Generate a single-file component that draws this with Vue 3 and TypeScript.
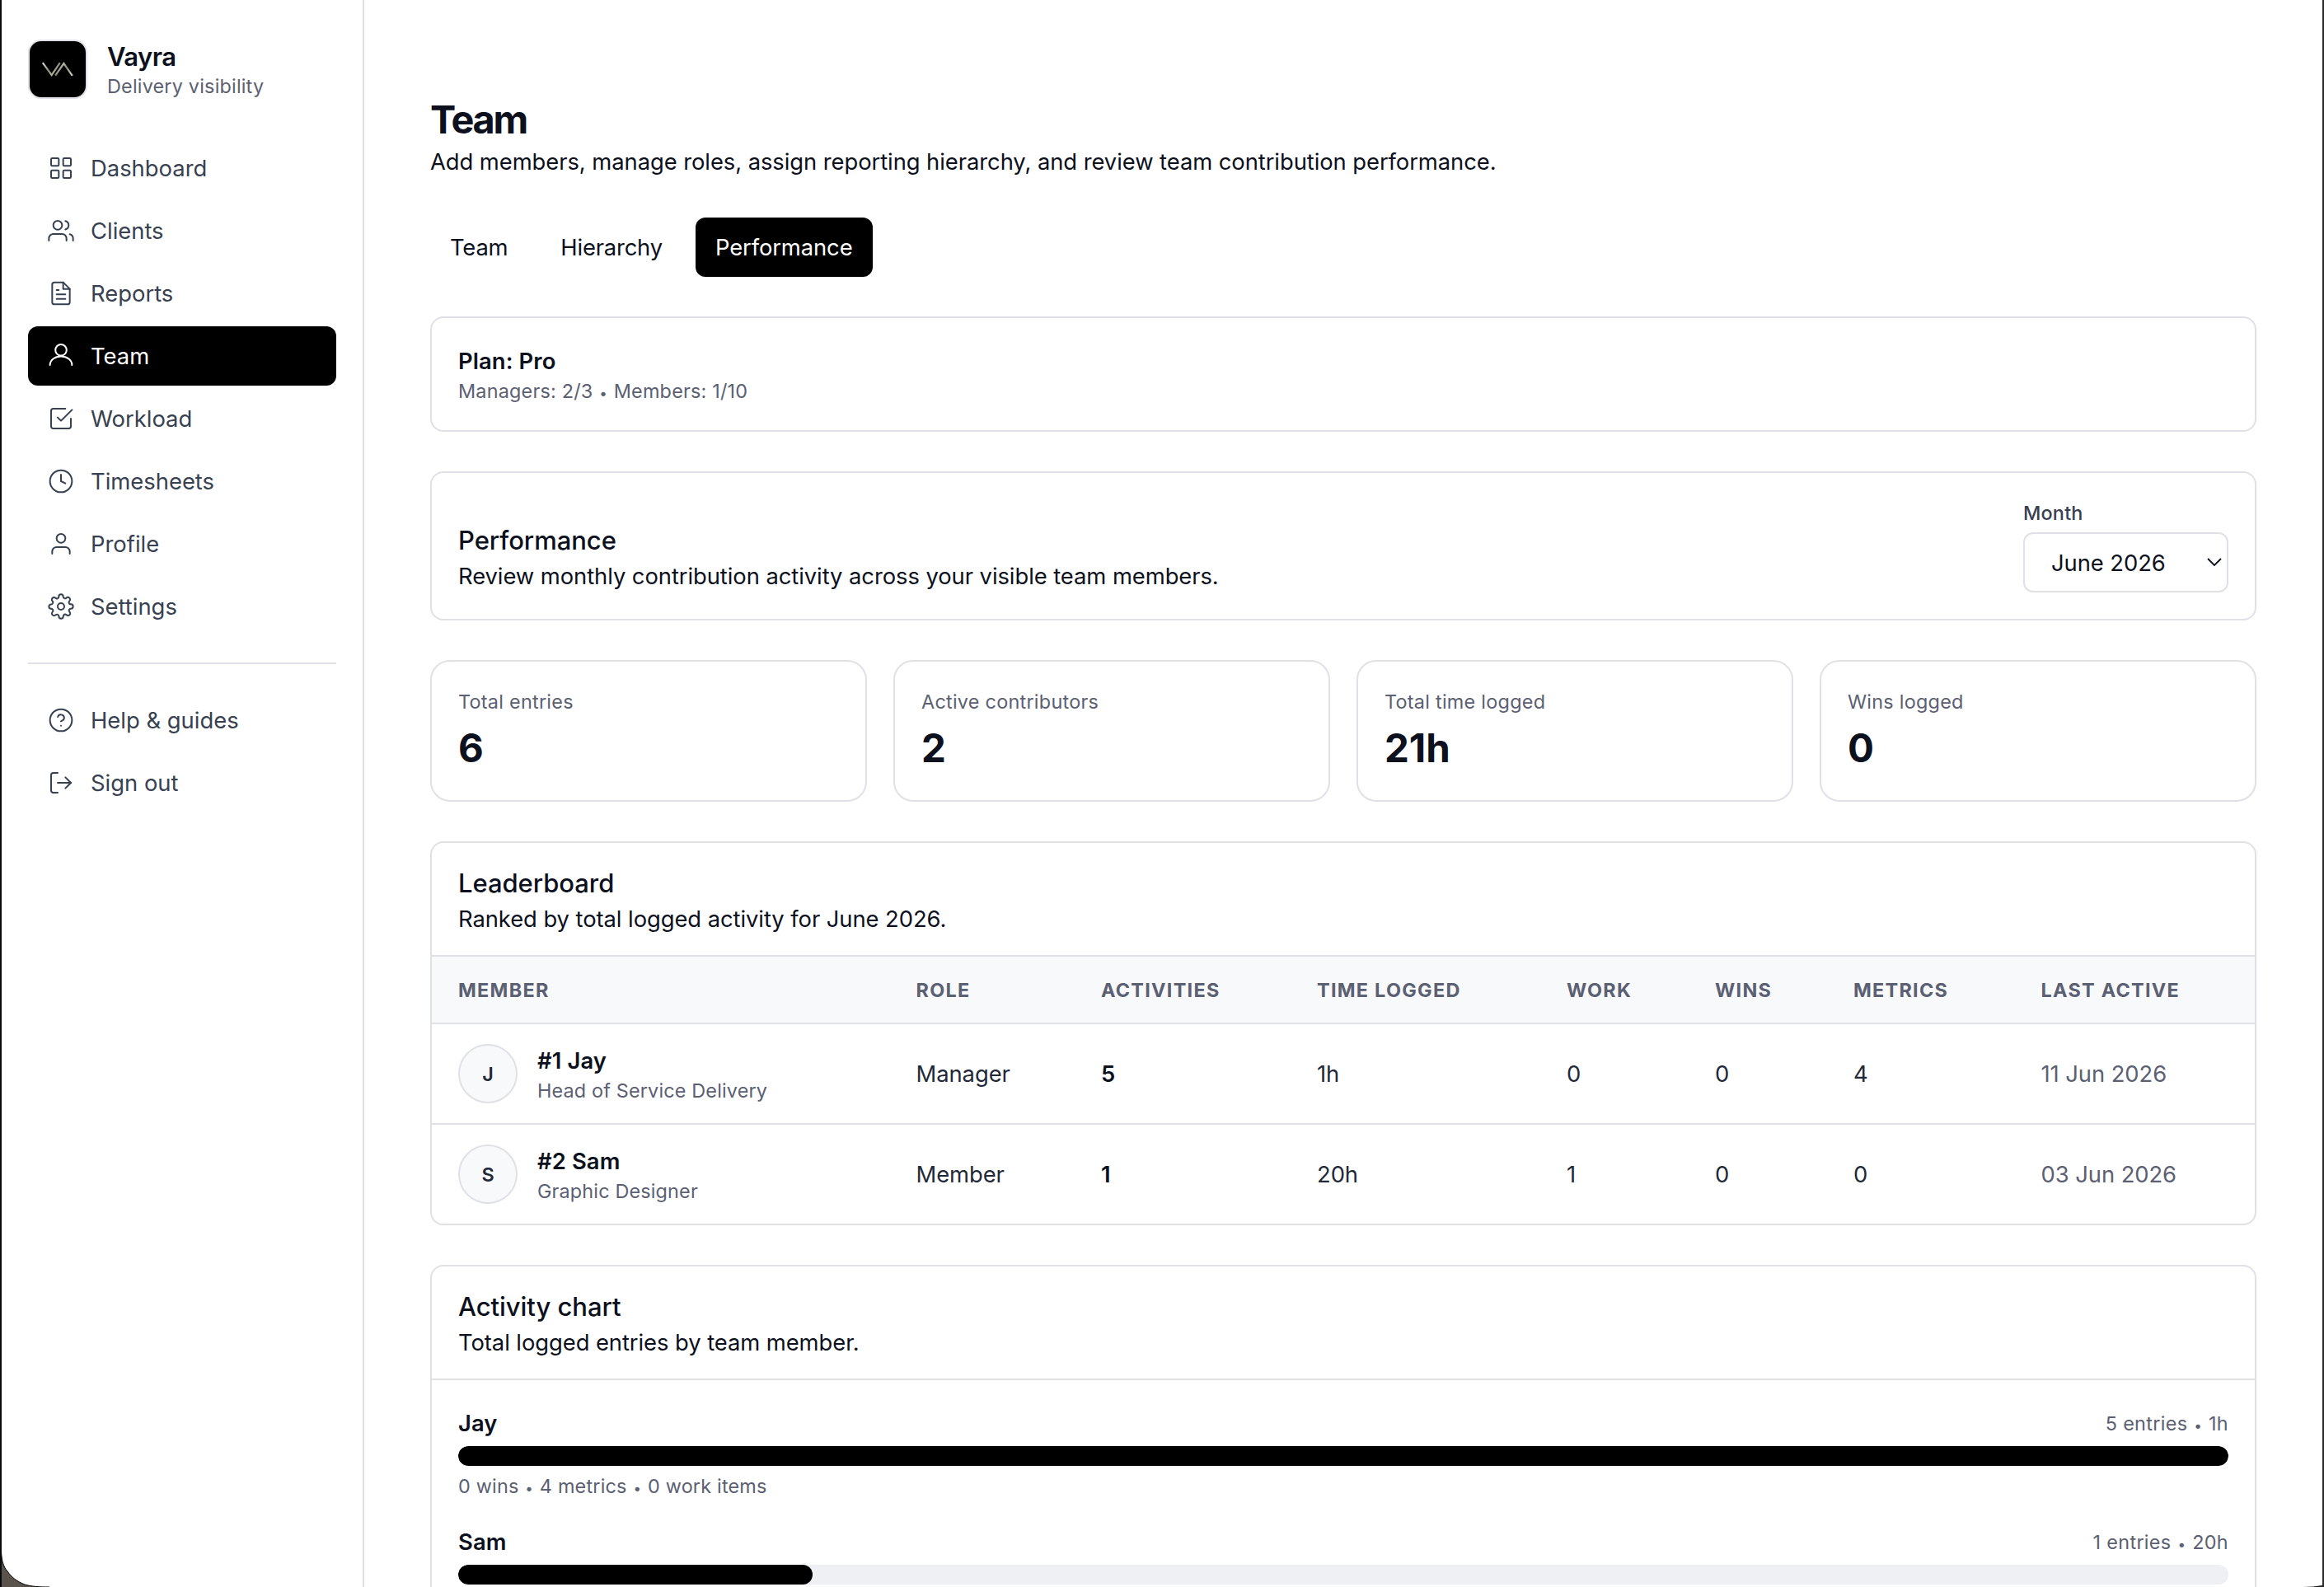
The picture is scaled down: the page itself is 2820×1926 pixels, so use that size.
<script setup lang="ts">
import { ref } from 'vue'

interface NavItem {
  label: string
  icon: string
  active?: boolean
}

const icons: Record<string, string> = {
  dashboard:
    '<rect x="3" y="3" width="7" height="7" rx="1"/><rect x="14" y="3" width="7" height="7" rx="1"/><rect x="3" y="14" width="7" height="7" rx="1"/><rect x="14" y="14" width="7" height="7" rx="1"/>',
  clients:
    '<path d="M17 21v-2a4 4 0 0 0-4-4H5a4 4 0 0 0-4 4v2"/><circle cx="9" cy="7" r="4"/><path d="M23 21v-2a4 4 0 0 0-3-3.87"/><path d="M16 3.13a4 4 0 0 1 0 7.75"/>',
  reports:
    '<path d="M14 2H6a2 2 0 0 0-2 2v16a2 2 0 0 0 2 2h12a2 2 0 0 0 2-2V8z"/><path d="M14 2v6h6"/><path d="M16 13H8"/><path d="M16 17H8"/><path d="M10 9H8"/>',
  team: '<circle cx="12" cy="6.6" r="5.1"/><path d="M2 20.2a10 7.8 0 0 1 20 0"/>',
  workload:
    '<path d="M9 11l3 3L22 4"/><path d="M21 12v7a2 2 0 0 1-2 2H5a2 2 0 0 1-2-2V5a2 2 0 0 1 2-2h11"/>',
  timesheets: '<circle cx="12" cy="12" r="10"/><path d="M12 6v6l4 2"/>',
  profile: '<path d="M20 21v-2a4 4 0 0 0-4-4H8a4 4 0 0 0-4 4v2"/><circle cx="12" cy="7" r="4"/>',
  settings:
    '<circle cx="12" cy="12" r="3"/><path d="M19.4 15a1.65 1.65 0 0 0 .33 1.82l.06.06a2 2 0 0 1 0 2.83 2 2 0 0 1-2.83 0l-.06-.06a1.65 1.65 0 0 0-1.82-.33 1.65 1.65 0 0 0-1 1.51V21a2 2 0 0 1-2 2 2 2 0 0 1-2-2v-.09A1.65 1.65 0 0 0 9 19.4a1.65 1.65 0 0 0-1.82.33l-.06.06a2 2 0 0 1-2.83 0 2 2 0 0 1 0-2.83l.06-.06a1.65 1.65 0 0 0 .33-1.82 1.65 1.65 0 0 0-1.51-1H3a2 2 0 0 1-2-2 2 2 0 0 1 2-2h.09A1.65 1.65 0 0 0 4.6 9a1.65 1.65 0 0 0-.33-1.82l-.06-.06a2 2 0 0 1 0-2.83 2 2 0 0 1 2.83 0l.06.06a1.65 1.65 0 0 0 1.82.33H9a1.65 1.65 0 0 0 1-1.51V3a2 2 0 0 1 2-2 2 2 0 0 1 2 2v.09a1.65 1.65 0 0 0 1 1.51 1.65 1.65 0 0 0 1.82-.33l.06-.06a2 2 0 0 1 2.83 0 2 2 0 0 1 0 2.83l-.06.06a1.65 1.65 0 0 0-.33 1.82V9a1.65 1.65 0 0 0 1.51 1H21a2 2 0 0 1 2 2 2 2 0 0 1-2 2h-.09a1.65 1.65 0 0 0-1.51 1z"/>',
  help: '<circle cx="12" cy="12" r="10"/><path d="M9.09 9a3 3 0 0 1 5.83 1c0 2-3 3-3 3"/><path d="M12 17h.01"/>',
  signout: '<path d="M9 21H5a2 2 0 0 1-2-2V5a2 2 0 0 1 2-2h4"/><path d="M16 17l5-5-5-5"/><path d="M21 12H9"/>',
}

const mainNav: NavItem[] = [
  { label: 'Dashboard', icon: 'dashboard' },
  { label: 'Clients', icon: 'clients' },
  { label: 'Reports', icon: 'reports' },
  { label: 'Team', icon: 'team', active: true },
  { label: 'Workload', icon: 'workload' },
  { label: 'Timesheets', icon: 'timesheets' },
  { label: 'Profile', icon: 'profile' },
  { label: 'Settings', icon: 'settings' },
]

const footerNav: NavItem[] = [
  { label: 'Help & guides', icon: 'help' },
  { label: 'Sign out', icon: 'signout' },
]

const tabs = ['Team', 'Hierarchy', 'Performance']
const activeTab = ref('Performance')

const stats = [
  { label: 'Total entries', value: '6' },
  { label: 'Active contributors', value: '2' },
  { label: 'Total time logged', value: '21h' },
  { label: 'Wins logged', value: '0' },
]

const columns = ['Member', 'Role', 'Activities', 'Time logged', 'Work', 'Wins', 'Metrics', 'Last active']

const members = [
  { rank: 1, name: 'Jay', title: 'Head of Service Delivery', role: 'Manager', entries: 5, time: '1h', work: 0, wins: 0, metrics: 4, last: '11 Jun 2026' },
  { rank: 2, name: 'Sam', title: 'Graphic Designer', role: 'Member', entries: 1, time: '20h', work: 1, wins: 0, metrics: 0, last: '03 Jun 2026' },
]

const maxEntries = Math.max(...members.map((m) => m.entries))
</script>

<template>
  <div class="window">
    <aside class="sidebar">
      <div class="brand">
        <div class="logo">
          <svg viewBox="0 0 72 72" fill="none" stroke-width="2.2">
            <defs>
              <linearGradient id="metal" x1="0" y1="0" x2="1" y2="1">
                <stop offset="0" stop-color="#dcdcd0" />
                <stop offset="0.5" stop-color="#8c8c7a" />
                <stop offset="1" stop-color="#d6d5be" />
              </linearGradient>
            </defs>
            <path d="M17.8 28.2L28.6 43L38.8 28.2" stroke="url(#metal)" />
            <path d="M33.2 43.6L43.4 29L53.8 43.8" stroke="url(#metal)" />
          </svg>
        </div>
        <div>
          <div class="brand-name">Vayra</div>
          <div class="muted">Delivery visibility</div>
        </div>
      </div>
      <nav class="nav">
        <a v-for="item in mainNav" :key="item.label" class="nav-item" :class="{ active: item.active }">
          <svg class="icon" viewBox="0 0 24 24" v-html="icons[item.icon]"></svg>
          <span>{{ item.label }}</span>
        </a>
      </nav>
      <div class="divider"></div>
      <nav class="nav">
        <a v-for="item in footerNav" :key="item.label" class="nav-item">
          <svg class="icon" viewBox="0 0 24 24" v-html="icons[item.icon]"></svg>
          <span>{{ item.label }}</span>
        </a>
      </nav>
    </aside>

    <main class="main">
      <header>
        <h1>Team</h1>
        <p>Add members, manage roles, assign reporting hierarchy, and review team contribution performance.</p>
      </header>

      <div class="tabs">
        <button v-for="tab in tabs" :key="tab" class="tab" :class="{ active: tab === activeTab }" @click="activeTab = tab">
          {{ tab }}
        </button>
      </div>

      <section class="card plan">
        <div class="name">Plan: Pro</div>
        <div class="muted">Managers: 2/3 <i class="dot">•</i> Members: 1/10</div>
      </section>

      <section class="card filter">
        <div>
          <h2>Performance</h2>
          <p>Review monthly contribution activity across your visible team members.</p>
        </div>
        <div class="field">
          <label class="label">Month</label>
          <div class="select">
            <span>June 2026</span>
            <svg viewBox="0 0 18 11"><path d="M1 1L9 9L17 1" /></svg>
          </div>
        </div>
      </section>

      <section class="stats">
        <div v-for="stat in stats" :key="stat.label" class="card stat">
          <div class="muted">{{ stat.label }}</div>
          <div class="value">{{ stat.value }}</div>
        </div>
      </section>

      <section class="card">
        <div class="card-head">
          <h2>Leaderboard</h2>
          <p>Ranked by total logged activity for June 2026.</p>
        </div>
        <table>
          <colgroup>
            <col v-for="(c, i) in columns" :key="c" :class="'col-' + i" />
          </colgroup>
          <thead>
            <tr>
              <th v-for="c in columns" :key="c">{{ c }}</th>
            </tr>
          </thead>
          <tbody>
            <tr v-for="m in members" :key="m.rank">
              <td>
                <div class="member">
                  <div class="avatar">{{ m.name[0] }}</div>
                  <div>
                    <div class="name">#{{ m.rank }} {{ m.name }}</div>
                    <div class="muted">{{ m.title }}</div>
                  </div>
                </div>
              </td>
              <td>{{ m.role }}</td>
              <td class="strong">{{ m.entries }}</td>
              <td>{{ m.time }}</td>
              <td>{{ m.work }}</td>
              <td>{{ m.wins }}</td>
              <td>{{ m.metrics }}</td>
              <td class="last">{{ m.last }}</td>
            </tr>
          </tbody>
        </table>
      </section>

      <section class="card">
        <div class="card-head">
          <h2>Activity chart</h2>
          <p>Total logged entries by team member.</p>
        </div>
        <div class="chart">
          <div v-for="m in members" :key="m.rank">
            <div class="chart-top">
              <span class="name">{{ m.name }}</span>
              <span class="muted">{{ m.entries }} entries <i class="dot">•</i> {{ m.time }}</span>
            </div>
            <div class="track">
              <div class="fill" :style="{ width: (m.entries / maxEntries) * 100 + '%' }"></div>
            </div>
            <div v-if="m.rank === 1" class="muted">
              {{ m.wins }} wins <i class="dot">•</i> {{ m.metrics }} metrics <i class="dot">•</i> {{ m.work }} work items
            </div>
          </div>
        </div>
      </section>
    </main>

    <svg class="corner corner-left" viewBox="0 0 70 50">
      <path d="M0 0H2V8C2 18 4 25 9 31C14 38 20 43 30 47C38 49.5 48 50 60 50H0Z" fill="#5a534c" />
      <path d="M1.5 0V8C2 18 4 25 9 31C14 38 20 43 30 47C38 49.5 48 50 60 50" fill="none" stroke="#000" stroke-width="1" />
    </svg>
    <svg class="corner corner-right" viewBox="0 0 34 4">
      <path d="M34 1.6C26 3.4 14 4 4 4H34Z" fill="#1a1a1a" />
    </svg>
  </div>
</template>

<style>
html,
body {
  margin: 0;
  overflow: hidden;
  background: #fff;
}
</style>

<style scoped>
* {
  box-sizing: border-box;
}

.window {
  position: relative;
  display: flex;
  width: 2820px;
  height: 1926px;
  overflow: hidden;
  background: #fff;
  border-left: 2px solid #0b0a0a;
  border-right: 2px solid #2a2a2a;
  font-family: Inter, 'Liberation Sans', sans-serif;
  font-size: 27.4px;
  line-height: 40px;
  letter-spacing: -0.07px;
  color: #0c111d;
}

h1,
h2,
p {
  margin: 0;
}

h1 {
  padding-top: 2px;
  font-size: 46.8px;
  line-height: 62px;
  font-weight: 670;
  letter-spacing: -2.2px;
}

h2 {
  padding-top: 1px;
  font-size: 31px;
  line-height: 47px;
  font-weight: 540;
  letter-spacing: -0.05px;
}

.muted {
  padding-top: 1px;
  font-size: 23.4px;
  line-height: 31px;
  letter-spacing: 0.2px;
  color: #5b6072;
}

.dot {
  margin: 0 1px;
  font-size: 17px;
  font-style: normal;
  line-height: 1;
}

.name {
  font-weight: 560;
  letter-spacing: 0.1px;
}

.sidebar {
  flex: none;
  width: 440px;
  height: 1926px;
  padding: 48px 32px;
  border-right: 2px solid #e0e0e7;
}

.brand {
  display: flex;
  align-items: center;
  gap: 24px;
  height: 72px;
  margin-bottom: 48px;
}

.logo {
  width: 72px;
  height: 72px;
  border: 2px solid #e0e0e7;
  border-radius: 16px;
  background: #000;
}

.logo svg {
  display: block;
  width: 72px;
  height: 72px;
  margin: -2px;
}

.brand-name {
  padding-top: 1px;
  font-size: 31px;
  line-height: 39px;
  font-weight: 640;
  letter-spacing: -0.5px;
}

.nav {
  display: flex;
  flex-direction: column;
  gap: 4px;
}

.nav-item {
  display: flex;
  align-items: center;
  gap: 20px;
  height: 72px;
  padding: 0 24px;
  border-radius: 12px;
  letter-spacing: 0;
  color: #374151;
}

.nav-item.active {
  background: #000;
  color: #fff;
}

.icon {
  width: 32px;
  height: 32px;
  fill: none;
  stroke: currentColor;
  stroke-width: 1.5;
  stroke-linecap: round;
  stroke-linejoin: round;
}

.divider {
  height: 2px;
  margin: 32px 0;
  background: #e0e0e7;
}

.main {
  display: flex;
  flex: 1;
  flex-direction: column;
  gap: 48px;
  min-width: 0;
  padding: 112px 80px 0;
}

.main > * {
  flex: none;
}

.tabs {
  display: flex;
  gap: 16px;
}

.tab {
  height: 72px;
  padding: 0 24px;
  border: 0;
  border-radius: 12px;
  background: transparent;
  font: inherit;
  letter-spacing: -0.2px;
  color: inherit;
}

.tab.active {
  background: #000;
  letter-spacing: -0.1px;
  color: #fff;
}

.card {
  border: 2px solid #e0e0e7;
  border-radius: 16px;
  overflow: hidden;
}

.plan {
  padding: 32px;
}

.filter {
  display: flex;
  align-items: flex-end;
  justify-content: space-between;
  height: 181px;
  padding: 32px;
}

.field {
  width: 249px;
}

.label {
  display: block;
  margin-bottom: 8px;
  padding-top: 1px;
  font-size: 23.4px;
  line-height: 31px;
  font-weight: 540;
  letter-spacing: 0.2px;
  color: #374151;
}

.select {
  display: flex;
  align-items: center;
  justify-content: space-between;
  height: 73px;
  padding: 0 6px 0 32px;
  border: 2px solid #e0e0e7;
  border-radius: 12px;
}

.select svg {
  width: 18px;
  height: 11px;
  fill: none;
  stroke: #0c111d;
  stroke-width: 1.8;
}

.stats {
  display: grid;
  grid-template-columns: repeat(4, 1fr);
  gap: 32px;
}

.stat {
  padding: 32px;
  border-radius: 24px;
}

.stat .muted {
  letter-spacing: 0.26px;
}

.value {
  margin-top: 8px;
  padding-top: 2px;
  font-size: 47.4px;
  line-height: 62px;
  font-weight: 670;
  letter-spacing: 0;
}

.card-head {
  padding: 24px 32px;
  border-bottom: 2px solid #e0e0e7;
}

table {
  width: 2212px;
  table-layout: fixed;
  border-collapse: separate;
  border-spacing: 0;
}

.col-0 {
  width: 555.5px;
}
.col-1 {
  width: 224.5px;
}
.col-2 {
  width: 262px;
}
.col-3 {
  width: 303px;
}
.col-4 {
  width: 180px;
}
.col-5 {
  width: 168px;
}
.col-6 {
  width: 227.5px;
}

th {
  height: 82px;
  padding: 2px 32px 0;
  border-bottom: 2px solid #e0e0e7;
  background: #f8f9fb;
  font-size: 23.4px;
  font-weight: 650;
  letter-spacing: 1.28px;
  text-align: left;
  text-transform: uppercase;
  white-space: nowrap;
  color: #5b6072;
}

td {
  height: 122px;
  padding: 0 32px;
  border-bottom: 2px solid #e0e0e7;
  color: #1f2937;
}

tr:last-child td {
  height: 120px;
  border-bottom: 0;
}

.member {
  display: flex;
  align-items: center;
  gap: 24px;
  color: #0c111d;
}

.member .muted {
  letter-spacing: 0.16px;
}

.avatar {
  display: flex;
  align-items: center;
  justify-content: center;
  width: 72px;
  height: 72px;
  padding-top: 1px;
  border: 2px solid #e0e0e7;
  border-radius: 50%;
  background: #f8f9fb;
  font-size: 23.4px;
  font-weight: 600;
  color: #1f2937;
}

td.strong {
  font-weight: 640;
  color: #0c111d;
}

td.last {
  color: #5b6072;
}

.chart {
  display: flex;
  flex-direction: column;
  gap: 32px;
  padding: 32px;
}

.chart-top {
  display: flex;
  align-items: center;
  justify-content: space-between;
}

.chart-top .muted {
  letter-spacing: 0.32px;
}

.track {
  height: 24px;
  margin: 8px 0;
  border-radius: 12px;
  background: #eff0f4;
  overflow: hidden;
}

.fill {
  height: 24px;
  border-radius: 12px;
  background: #000;
}

.corner {
  position: absolute;
  bottom: 0;
}

.corner-left {
  left: -2px;
  width: 70px;
  height: 50px;
}

.corner-right {
  right: -2px;
  width: 34px;
  height: 4px;
}
</style>
